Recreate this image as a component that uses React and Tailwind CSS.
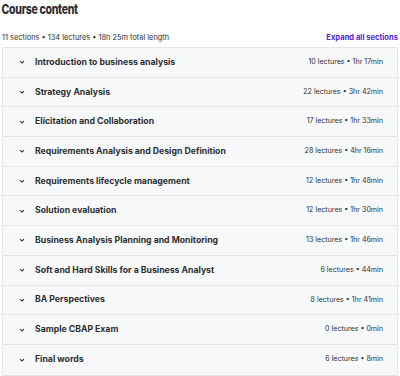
const sections = [
  ["Introduction to business analysis", "10 lectures • 1hr 17min"],
  ["Strategy Analysis", "22 lectures • 3hr 42min"],
  ["Elicitation and Collaboration", "17 lectures • 1hr 33min"],
  ["Requirements Analysis and Design Definition", "28 lectures • 4hr 16min"],
  ["Requirements lifecycle management", "12 lectures • 1hr 48min"],
  ["Solution evaluation", "12 lectures • 1hr 30min"],
  ["Business Analysis Planning and Monitoring", "13 lectures • 1hr 46min"],
  ["Soft and Hard Skills for a Business Analyst", "6 lectures • 44min"],
  ["BA Perspectives", "8 lectures • 1hr 41min"],
  ["Sample CBAP Exam", "0 lectures • 0min"],
  ["Final words", "6 lectures • 8min"],
];

const Chevron = () => (
  <svg width="8" height="8" viewBox="0 0 10 10" className="shrink-0">
    <path d="M2.5 3.8 L5 6.3 L7.5 3.8" fill="none" stroke="#2d2f31" strokeWidth="1.3" />
  </svg>
);

export default function App() {
  return (
    <div className="h-[376px] w-[400px] bg-white font-['Inter',sans-serif] text-[#2d2f31]">
      <h2 className="origin-left scale-x-[0.78] pl-[2px] pt-[1px] text-[13.5px] font-extrabold leading-[16px] tracking-[-0.4px]">
        Course content
      </h2>
      <div className="mt-[16px] flex items-center justify-between pl-[2px] pr-[2px]">
        <span className="text-[7.4px] leading-[10px]">
          11 sections • 134 lectures • 18h 25m total length
        </span>
        <button className="text-[7.6px] font-bold leading-[10px] text-[#5624d0]">
          Expand all sections
        </button>
      </div>
      <div className="mx-[2px] mt-[4px] border border-[#e4e6e8]">
        {sections.map(([title, meta], i) => (
          <div
            key={title}
            className={
              "flex h-[29.7px] items-center bg-[#f7f9fa] pl-[15px] pr-[14px] " +
              (i < sections.length - 1 ? "border-b border-[#e4e6e8]" : "")
            }
          >
            <Chevron />
            <span className="ml-[9px] flex-1 text-[8.7px] font-bold">{title}</span>
            <span className="text-[7.1px]">{meta}</span>
          </div>
        ))}
      </div>
    </div>
  );
}
